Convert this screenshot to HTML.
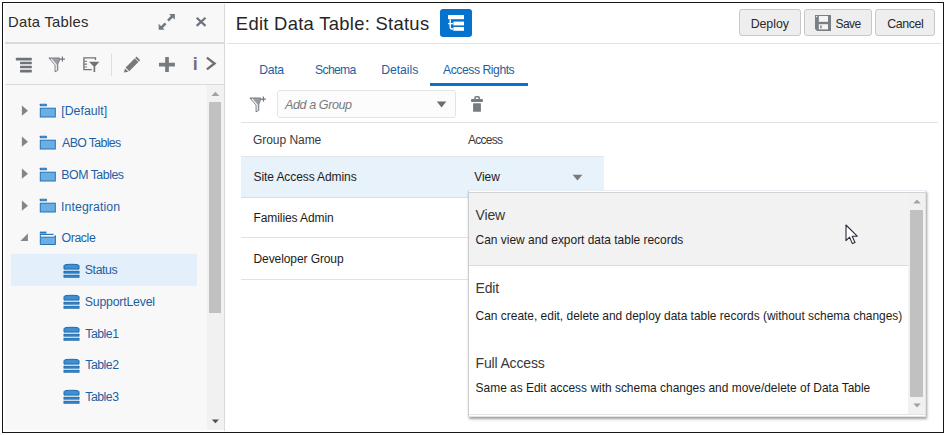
<!DOCTYPE html>
<html lang="en">
<head>
<meta charset="utf-8">
<title>Edit Data Table: Status</title>
<style>
html,body{margin:0;padding:0;background:#fff;}
body{width:946px;height:435px;position:relative;overflow:hidden;font-family:"Liberation Sans",Arial,sans-serif;color:#333;}
.abs{position:absolute;}
.frame{position:absolute;left:2px;top:2px;width:942px;height:431px;box-sizing:border-box;border:1px solid #161616;}
.t{position:absolute;white-space:nowrap;line-height:20px;height:20px;margin-top:-10px;}
.hl{position:absolute;height:1px;background:#e0e0e0;}
.vl{position:absolute;width:1px;background:#e0e0e0;}
/* left panel */
#lp{position:absolute;left:5px;top:4px;width:219px;height:426px;background:#f8f8f8;}
.tree{color:#1d5fa3;font-size:12.3px;letter-spacing:-0.35px;}
.btn{position:absolute;top:9.2px;height:26.4px;box-sizing:border-box;border:1px solid #c6c9cb;border-radius:3px;background:#eeeeee;}
.btxt{font-size:12.4px;letter-spacing:-0.3px;color:#2a2a2a;}
.tab{font-size:12.2px;letter-spacing:-0.3px;color:#1d5fa3;}
.hdr{font-size:12px;letter-spacing:-0.25px;color:#3a3a3a;}
.cell{font-size:12px;letter-spacing:-0.09px;color:#1c1c1c;}
.ot{font-size:14px;letter-spacing:-0.15px;color:#383838;}
.od{font-size:11.94px;color:#1c1c1c;}
</style>
</head>
<body>
<div class="frame"></div>

<!-- ================= LEFT PANEL ================= -->
<div id="lp"></div>
<div class="vl" style="left:223.8px;top:4px;width:1.6px;height:427px;background:#dadada;"></div>
<span class="t" id="t_dt" style="left:8.1px;top:21.6px;font-size:14.8px;color:#2b2b2b;letter-spacing:0.24px;">Data Tables</span>

<!-- expand icon -->
<svg class="abs" style="left:158px;top:13px;" width="18" height="18" viewBox="0 0 18 18">
  <g fill="none" stroke="#717a83" stroke-width="2.6">
    <path d="M10 7.6 L14.6 3"/><path d="M7.6 10.4 L3 15"/>
  </g>
  <path d="M11 0.9 H16.9 V6.8 Z" fill="#717a83"/>
  <path d="M0.7 10.8 V16.7 H6.6 Z" fill="#717a83"/>
</svg>
<!-- close icon -->
<svg class="abs" style="left:195px;top:16px;" width="12" height="12" viewBox="0 0 12 12">
  <path d="M1.7 1.8 L10.5 9.9 M10.5 1.8 L1.7 9.9" stroke="#6a747e" stroke-width="2.2" fill="none"/>
</svg>

<div class="hl" style="left:5px;top:42.3px;height:1.5px;width:219px;background:#dadada;"></div>
<div class="hl" style="left:5px;top:83.8px;height:1.5px;width:219px;background:#dadada;"></div>

<!-- toolbar icons -->
<svg class="abs" style="left:15px;top:56px;" width="18" height="18" viewBox="0 0 18 18">
  <g fill="#6f7377">
    <rect x="0.9" y="1.8" width="15.9" height="2.6" rx="0.4"/>
    <rect x="5" y="5.8" width="11.8" height="2.5" rx="0.4"/>
    <rect x="5" y="9.8" width="11.8" height="2.5" rx="0.4"/>
    <rect x="5" y="13.8" width="11.8" height="2.6" rx="0.4"/>
  </g>
</svg>
<svg class="abs" style="left:48px;top:56px;" width="18" height="18" viewBox="0 0 18 18">
  <path d="M0.9 1.9 H11.5 V4.3 L9.8 8.1 V14.4 L7 15.9 V9.1 Z" fill="#999da1" stroke="#707478" stroke-width="0.8" stroke-linejoin="round"/>
  <path d="M3.1 2.9 L8.2 9 V14.7" stroke="#f6f6f6" stroke-width="1.2" fill="none"/>
  <path d="M14.4 0.6 V5.6 M11.9 3.1 H16.9" stroke="#73777b" stroke-width="1.2" fill="none"/>
</svg>
<svg class="abs" style="left:82px;top:55px;" width="19" height="19" viewBox="0 0 19 19">
  <path d="M13.5 4.9 V2.8 H1.9 V14.6 H9.8" stroke="#6f7377" stroke-width="1.3" fill="none"/>
  <path d="M1.9 6.2 H5 M1.9 9.1 H5 M1.9 12 H5" stroke="#6f7377" stroke-width="1.1" fill="none"/>
  <path d="M7 6.7 H17.4 L13.2 11.4 V17 L11.6 17 V11.4 Z" fill="#6f7377"/>
</svg>
<div class="vl" style="left:111px;top:54px;height:22px;background:#dedede;"></div>
<svg class="abs" style="left:123px;top:55px;" width="19" height="19" viewBox="0 0 19 19">
  <path d="M13.6 1.6 L17.2 5.2 L6.2 16.2 L2.6 12.6 Z" fill="#757a7e"/>
  <path d="M2 13.4 L5.4 16.8 L0.9 17.6 Z" fill="#757a7e"/>
  <path d="M12 3.2 L15.6 6.8" stroke="#f8f8f8" stroke-width="1"/>
</svg>
<svg class="abs" style="left:158px;top:56px;" width="18" height="18" viewBox="0 0 18 18">
  <path d="M9 1.1 V16.1 M1 8.7 H16.9" stroke="#767b80" stroke-width="3.7" fill="none"/>
</svg>
<span class="t" style="left:192.7px;top:64.2px;font-size:18px;font-weight:bold;line-height:24px;height:24px;margin-top:-12px;color:#6f7479;">i</span>
<svg class="abs" style="left:204px;top:55px;" width="14" height="18" viewBox="0 0 14 18">
  <path d="M2.9 2.6 L10.5 8.5 L2.9 14.4" stroke="#6c7177" stroke-width="2.4" fill="none"/>
</svg>

<!-- left scrollbar -->
<div class="abs" style="left:207px;top:85px;width:17px;height:345px;background:#f1f1f1;"></div>
<div class="abs" style="left:209px;top:102px;width:12px;height:211px;background:#c1c1c1;"></div>
<svg class="abs" style="left:211px;top:91px;" width="9" height="6" viewBox="0 0 9 6"><path d="M0.4 5 L4.4 0.8 L8.4 5 Z" fill="#a3a3a3"/></svg>
<svg class="abs" style="left:211px;top:419px;" width="9" height="5" viewBox="0 0 9 5"><path d="M0.8 0.4 H8 L4.4 4.2 Z" fill="#505050"/></svg>

<!-- selected row -->
<div class="abs" style="left:11px;top:254px;width:186px;height:32px;background:#e3effa;"></div>

<!-- tree rows inserted below -->
<!--TREE-->
<svg class="abs" style="left:21px;top:104.5px;" width="8" height="12" viewBox="0 0 8 12"><path d="M0.9 0.6 L7 5.7 L0.9 10.8 Z" fill="#848484"/></svg>
<svg class="abs" style="left:39px;top:103px;" width="18" height="16" viewBox="0 0 18 16"><rect x="0.8" y="0.7" width="7.1" height="2.6" rx="0.6" fill="#2a78bd"/><rect x="2.2" y="1.5" width="4.2" height="0.9" fill="#5b9fd8"/><rect x="1.3" y="5.2" width="15" height="8.8" fill="#6cade2" stroke="#2273b8" stroke-width="1"/></svg>
<span class="t tree" id="t_f0" style="left:61.3px;top:111.3px;letter-spacing:0.012px;">[Default]</span>
<svg class="abs" style="left:21px;top:136.3px;" width="8" height="12" viewBox="0 0 8 12"><path d="M0.9 0.6 L7 5.7 L0.9 10.8 Z" fill="#848484"/></svg>
<svg class="abs" style="left:39px;top:134.8px;" width="18" height="16" viewBox="0 0 18 16"><rect x="0.8" y="0.7" width="7.1" height="2.6" rx="0.6" fill="#2a78bd"/><rect x="2.2" y="1.5" width="4.2" height="0.9" fill="#5b9fd8"/><rect x="1.3" y="5.2" width="15" height="8.8" fill="#6cade2" stroke="#2273b8" stroke-width="1"/></svg>
<span class="t tree" id="t_f1" style="left:62.05px;top:143.1px;letter-spacing:-0.622px;">ABO Tables</span>
<svg class="abs" style="left:21px;top:168.0px;" width="8" height="12" viewBox="0 0 8 12"><path d="M0.9 0.6 L7 5.7 L0.9 10.8 Z" fill="#848484"/></svg>
<svg class="abs" style="left:39px;top:166.5px;" width="18" height="16" viewBox="0 0 18 16"><rect x="0.8" y="0.7" width="7.1" height="2.6" rx="0.6" fill="#2a78bd"/><rect x="2.2" y="1.5" width="4.2" height="0.9" fill="#5b9fd8"/><rect x="1.3" y="5.2" width="15" height="8.8" fill="#6cade2" stroke="#2273b8" stroke-width="1"/></svg>
<span class="t tree" id="t_f2" style="left:61.3px;top:174.8px;letter-spacing:-0.456px;">BOM Tables</span>
<svg class="abs" style="left:21px;top:199.7px;" width="8" height="12" viewBox="0 0 8 12"><path d="M0.9 0.6 L7 5.7 L0.9 10.8 Z" fill="#848484"/></svg>
<svg class="abs" style="left:39px;top:198.2px;" width="18" height="16" viewBox="0 0 18 16"><rect x="0.8" y="0.7" width="7.1" height="2.6" rx="0.6" fill="#2a78bd"/><rect x="2.2" y="1.5" width="4.2" height="0.9" fill="#5b9fd8"/><rect x="1.3" y="5.2" width="15" height="8.8" fill="#6cade2" stroke="#2273b8" stroke-width="1"/></svg>
<span class="t tree" id="t_f3" style="left:61.05px;top:206.5px;letter-spacing:0.085px;">Integration</span>
<svg class="abs" style="left:20px;top:233.2px;" width="9" height="9" viewBox="0 0 9 9"><path d="M7.9 0.4 V7.9 H0.4 Z" fill="#858585"/></svg>
<svg class="abs" style="left:39px;top:230.7px;" width="18" height="16" viewBox="0 0 18 16"><path d="M0.8 0.6 H7.4 V2.6 H0.8 Z" fill="#2a78bd"/><path d="M1.2 3.4 H14.6" stroke="#2a78bd" stroke-width="1.2"/><path d="M1.3 13.5 V6.2 H14.2 Q16.4 6.2 16.4 4.6 V13.5 Z" fill="#6cade2" stroke="#2273b8" stroke-width="1" stroke-linejoin="round"/><path d="M1.3 6 V3"  stroke="#2273b8" stroke-width="1"/></svg>
<span class="t tree" id="t_f4" style="left:61.55px;top:237.8px;letter-spacing:-0.4px;">Oracle</span>
<svg class="abs" style="left:63px;top:262.5px;" width="18" height="16" viewBox="0 0 18 16"><g fill="#3d90d6" stroke="#1c69ae" stroke-width="1"><path d="M1 6.1 V2.7 Q1 1.3 8.5 1.3 Q16 1.3 16 2.7 V6.1 Z"/><rect x="1" y="8.3" width="15" height="1.8"/><rect x="1" y="12.3" width="15" height="1.9"/></g></svg>
<span class="t tree" id="t_t0" style="left:84.8px;top:270.3px;letter-spacing:-0.39px;">Status</span>
<svg class="abs" style="left:63px;top:294.2px;" width="18" height="16" viewBox="0 0 18 16"><g fill="#3d90d6" stroke="#1c69ae" stroke-width="1"><path d="M1 6.1 V2.7 Q1 1.3 8.5 1.3 Q16 1.3 16 2.7 V6.1 Z"/><rect x="1" y="8.3" width="15" height="1.8"/><rect x="1" y="12.3" width="15" height="1.9"/></g></svg>
<span class="t tree" id="t_t1" style="left:84.8px;top:302.0px;letter-spacing:-0.2px;">SupportLevel</span>
<svg class="abs" style="left:63px;top:325.9px;" width="18" height="16" viewBox="0 0 18 16"><g fill="#3d90d6" stroke="#1c69ae" stroke-width="1"><path d="M1 6.1 V2.7 Q1 1.3 8.5 1.3 Q16 1.3 16 2.7 V6.1 Z"/><rect x="1" y="8.3" width="15" height="1.8"/><rect x="1" y="12.3" width="15" height="1.9"/></g></svg>
<span class="t tree" id="t_t2" style="left:85.3px;top:333.7px;letter-spacing:-0.5px;">Table1</span>
<svg class="abs" style="left:63px;top:357.6px;" width="18" height="16" viewBox="0 0 18 16"><g fill="#3d90d6" stroke="#1c69ae" stroke-width="1"><path d="M1 6.1 V2.7 Q1 1.3 8.5 1.3 Q16 1.3 16 2.7 V6.1 Z"/><rect x="1" y="8.3" width="15" height="1.8"/><rect x="1" y="12.3" width="15" height="1.9"/></g></svg>
<span class="t tree" id="t_t3" style="left:85.3px;top:365.4px;letter-spacing:-0.5px;">Table2</span>
<svg class="abs" style="left:63px;top:389.3px;" width="18" height="16" viewBox="0 0 18 16"><g fill="#3d90d6" stroke="#1c69ae" stroke-width="1"><path d="M1 6.1 V2.7 Q1 1.3 8.5 1.3 Q16 1.3 16 2.7 V6.1 Z"/><rect x="1" y="8.3" width="15" height="1.8"/><rect x="1" y="12.3" width="15" height="1.9"/></g></svg>
<span class="t tree" id="t_t4" style="left:85.3px;top:397.1px;letter-spacing:-0.5px;">Table3</span>
<!--/TREE-->

<!-- ================= MAIN PANEL ================= -->
<span class="t" id="t_title" style="left:235.85px;top:24.2px;font-size:18.4px;line-height:26px;height:26px;margin-top:-13px;color:#262626;letter-spacing:0.295px;">Edit Data Table: Status</span>
<div class="abs" style="left:440px;top:9px;width:32px;height:28px;border-radius:3px;background:#0572ce;"></div>
<svg class="abs" style="left:440px;top:9px;" width="32" height="28" viewBox="0 0 32 28">
  <g fill="#fff">
    <rect x="8" y="6" width="16" height="4.2"/>
    <rect x="13.4" y="12.6" width="10.6" height="3.8"/>
    <rect x="13.4" y="18" width="10.6" height="3.8"/>
  </g>
  <path d="M10.2 10.2 V18.6 Q10.2 20 11.6 20 H13.4 M8 14.6 H13.4" stroke="#fff" stroke-width="1.4" fill="none"/>
</svg>

<div class="btn" style="left:739px;width:62px;"></div>
<div class="btn" style="left:804px;width:68px;"></div>
<div class="btn" style="left:875px;width:60px;"></div>
<span class="t btxt" id="t_deploy" style="left:750.65px;top:23.6px;letter-spacing:-0.06px;">Deploy</span>
<span class="t btxt" id="t_save" style="left:835.5px;top:23.6px;font-size:12px;letter-spacing:-0.583px;">Save</span>
<span class="t btxt" id="t_cancel" style="left:887.25px;top:23.6px;letter-spacing:-0.4px;">Cancel</span>
<svg class="abs" style="left:815px;top:15px;" width="16" height="16" viewBox="0 0 16 16">
  <path d="M0 0 H16 V16 H2 L0 14 Z" fill="#7a7f84"/>
  <rect x="3.8" y="1" width="9.2" height="5.8" fill="#f4f4f4"/>
  <rect x="3.8" y="9.2" width="9.2" height="5.2" fill="#f4f4f4"/>
  <rect x="5.2" y="10.4" width="1.4" height="3" fill="#7a7f84"/>
  <rect x="0.9" y="0.9" width="1.3" height="1.3" fill="#f4f4f4"/>
</svg>

<div class="hl" style="left:227px;top:42.6px;height:1.3px;width:715px;background:#e2e2e2;"></div>

<!-- tabs -->
<span class="t tab" id="t_tab1" style="left:259.25px;top:70.1px;letter-spacing:-0.35px;">Data</span>
<span class="t tab" id="t_tab2" style="left:315.05px;top:70.1px;letter-spacing:-0.68px;">Schema</span>
<span class="t tab" id="t_tab3" style="left:381.25px;top:70.1px;letter-spacing:-0.042px;">Details</span>
<span class="t tab" id="t_tab4" style="left:443.0px;top:70.1px;letter-spacing:-0.458px;">Access Rights</span>
<div class="abs" style="left:430px;top:83px;width:98px;height:3px;background:#0572ce;"></div>

<!-- toolbar -->
<svg class="abs" style="left:248.5px;top:96px;" width="18" height="18" viewBox="0 0 18 18">
  <path d="M0.9 1.9 H11.5 V4.3 L9.8 8.1 V14.4 L7 15.9 V9.1 Z" fill="#999da1" stroke="#707478" stroke-width="0.8" stroke-linejoin="round"/>
  <path d="M3.1 2.9 L8.2 9 V14.7" stroke="#f6f6f6" stroke-width="1.2" fill="none"/>
  <path d="M14.4 0.6 V5.6 M11.9 3.1 H16.9" stroke="#73777b" stroke-width="1.2" fill="none"/>
</svg>
<div class="abs" style="left:277px;top:90.3px;width:178.6px;height:27.6px;box-sizing:border-box;border:1px solid #e1e5e8;border-radius:3px;background:#fcfcfc;"></div>
<span class="t" id="t_ph" style="left:285.0px;top:104.5px;font-size:12.6px;font-style:italic;color:#7b7b7b;letter-spacing:-0.44px;">Add a Group</span>
<svg class="abs" style="left:436px;top:100.5px;" width="11" height="7" viewBox="0 0 11 7"><path d="M0.8 0.6 H10.3 L5.55 6.4 Z" fill="#6d6d6d"/></svg>
<svg class="abs" style="left:470px;top:95px;" width="14" height="18" viewBox="0 0 14 18">
  <path d="M4.9 4.3 V2.9 Q4.9 1.7 6.1 1.7 H8.1 Q9.3 1.7 9.3 2.9 V4.3" stroke="#777b7f" stroke-width="1.5" fill="none"/>
  <rect x="1" y="4.1" width="11.9" height="3" rx="0.8" fill="#777b7f"/>
  <rect x="3.1" y="8.2" width="7.8" height="8.6" rx="0.5" fill="#777b7f"/>
</svg>

<!-- table -->
<div class="hl" style="left:241px;top:122px;width:697px;background:#e2e2e2;"></div>
<span class="t hdr" id="t_h1" style="left:252.9px;top:139.5px;letter-spacing:-0.033px;">Group Name</span>
<span class="t hdr" id="t_h2" style="left:467.9px;top:139.5px;letter-spacing:-0.72px;">Access</span>
<div class="abs" style="left:241px;top:156px;width:363px;height:41px;background:#e8f2fa;"></div>
<div class="hl" style="left:241px;top:156px;width:363px;background:#dfe6ec;"></div>
<div class="hl" style="left:241px;top:197px;width:363px;background:#dcdfe2;"></div>
<div class="hl" style="left:241px;top:237px;width:363px;background:#e2e2e2;"></div>
<div class="hl" style="left:241px;top:279px;width:363px;background:#e2e2e2;"></div>
<span class="t cell" id="t_r1" style="left:253.5px;top:176.6px;">Site Access Admins</span>
<span class="t cell" id="t_r2" style="left:253.5px;top:218px;">Families Admin</span>
<span class="t cell" id="t_r3" style="left:253.5px;top:259px;">Developer Group</span>
<span class="t cell" id="t_v" style="left:474.3px;top:176.6px;">View</span>
<svg class="abs" style="left:572px;top:174px;" width="11" height="7" viewBox="0 0 11 7"><path d="M0.6 0.8 H10.4 L5.5 6.4 Z" fill="#7a7a7a"/></svg>

<!-- popup -->
<div class="abs" style="left:468px;top:190px;width:458px;height:227px;box-sizing:border-box;border:1px solid #cdcdcd;border-top:1.8px solid #e8eef3;border-right-color:#e4e4e4;border-bottom-color:#e4e4e4;background:#fff;box-shadow:1px 1.5px 2.5px rgba(0,0,0,0.38);"></div>
<div class="hl" style="left:468.5px;top:191.8px;width:457px;background:#d2d2d2;"></div>
<div class="abs" style="left:469px;top:192.8px;width:440px;height:72.2px;background:#f2f2f2;"></div>
<div class="hl" style="left:469px;top:265px;width:440px;background:#dcdcdc;"></div>
<div class="hl" style="left:469px;top:414px;width:456px;background:#e4e4e4;"></div>
<span class="t ot" id="t_o1" style="left:475.5px;top:215.0px;">View</span>
<span class="t od" id="t_d1" style="left:475.6px;top:240.2px;">Can view and export data table records</span>
<span class="t ot" id="t_o2" style="left:475.5px;top:288.3px;">Edit</span>
<span class="t od" id="t_d2" style="left:475.6px;top:316.3px;">Can create, edit, delete and deploy data table records (without schema changes)</span>
<span class="t ot" id="t_o3" style="left:475.5px;top:363.3px;">Full Access</span>
<span class="t od" id="t_d3" style="left:475.6px;top:388.3px;">Same as Edit access with schema changes and move/delete of Data Table</span>
<!-- popup scrollbar -->
<div class="abs" style="left:908.1px;top:192.8px;width:16.9px;height:221.2px;background:#f1f1f1;"></div>
<div class="abs" style="left:910.3px;top:210px;width:12.6px;height:186.6px;background:#c1c1c1;"></div>
<svg class="abs" style="left:912.5px;top:199px;" width="8" height="5" viewBox="0 0 8 5"><path d="M0.3 4.5 L4 0.6 L7.7 4.5 Z" fill="#a3a3a3"/></svg>
<svg class="abs" style="left:912.5px;top:402.5px;" width="8" height="5" viewBox="0 0 8 5"><path d="M0.3 0.5 H7.7 L4 4.6 Z" fill="#a0a0a0"/></svg>
<!-- cursor -->
<svg class="abs" style="left:845px;top:223.5px;" width="14" height="21" viewBox="0 0 14 21">
  <path d="M1 1 V16.6 L4.6 13.2 L7.4 19.6 L10 18.4 L7.2 12.2 H12.2 Z" fill="#fff" stroke="#2b2b3a" stroke-width="1.1" stroke-linejoin="round"/>
</svg>
</body>
</html>
